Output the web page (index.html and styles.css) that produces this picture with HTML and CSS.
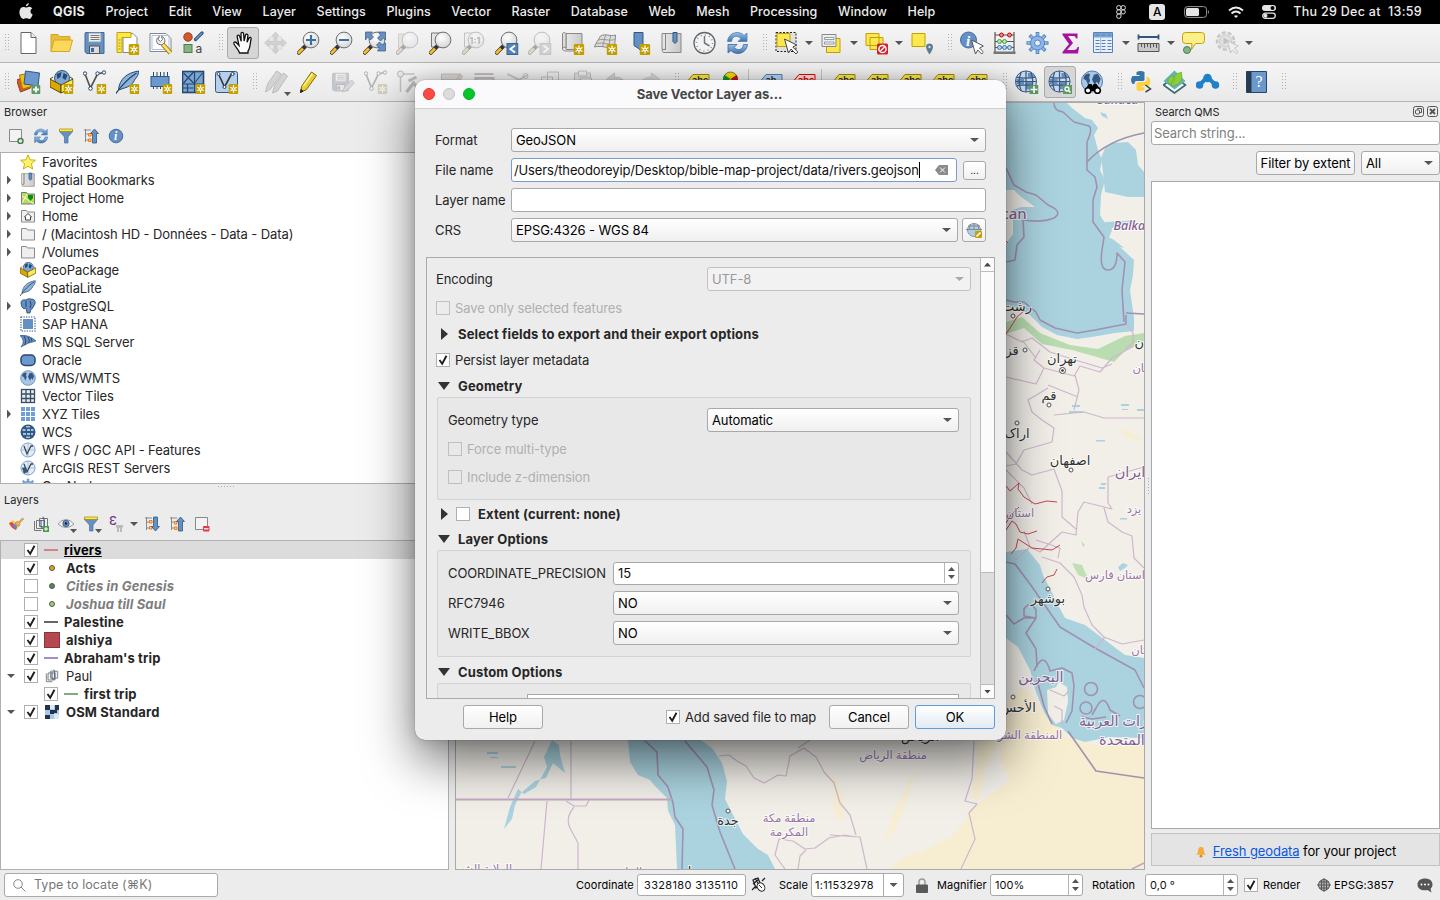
FILE: index.html
```html
<!DOCTYPE html>
<html lang="en">
<head>
<meta charset="utf-8">
<title>QGIS</title>
<link rel="stylesheet" href="styles.css">
</head>
<body>
<svg class="defs" aria-hidden="true">
<defs>
<linearGradient id="gl" x1="0" y1="0" x2="1" y2="0"><stop offset="0" stop-color="#e8e8e8"/><stop offset="1" stop-color="#c9c9c9"/></linearGradient>
<linearGradient id="gb" x1="0" y1="0" x2="0" y2="1"><stop offset="0" stop-color="#9cc0e6"/><stop offset="1" stop-color="#3d74b5"/></linearGradient>
<radialGradient id="glass" cx=".4" cy=".35" r=".7"><stop offset="0" stop-color="#fff"/><stop offset="1" stop-color="#d3d6d4"/></radialGradient>
</defs>
<symbol id="new" viewBox="0 0 11 11"><rect width="11" height="11" rx="1.500" fill="#c4a000"/><path d="M5.500 1.500v8M2 3.500l7 4M2 7.500l7-4" stroke="#fff" stroke-width="1.300"/><circle cx="5.500" cy="5.500" r="1.800" fill="#fff"/><circle cx="5.500" cy="5.500" r=".8" fill="#c4a000"/></symbol>
<symbol id="file" viewBox="0 0 24 24"><path d="M4.500 1.500h10l5 5v16h-15z" fill="#fff" stroke="#666"/><path d="M14.500 1.500v5h5" fill="#eee" stroke="#666"/></symbol>
<symbol id="open" viewBox="0 0 24 24"><path d="M1.500 20.500v-17h7l1.500 2h10.500v4" fill="#e8bd3b" stroke="#d5a629"/><path d="M1.500 20.500l3-11.500h18.500l-3 11.500z" fill="#fbd75b" stroke="#d5a629"/></symbol>
<symbol id="save" viewBox="0 0 24 24"><path d="M3 1.500h18.500v21H4l-1.500-2v-18z" fill="#6490c4" stroke="#3f6a9a"/><path d="M6 2h12.500v9H6z" fill="#eee" stroke="#8b9fb5"/><path d="M8 4.500h9M8 6.500h9M8 8.500h9" stroke="#777"/><path d="M7 15h10v7.500H7z" fill="#ddd" stroke="#555"/><path d="M8.500 17h3v4h-3z" fill="#3f6a9a"/></symbol>
<symbol id="layout" viewBox="0 0 24 24"><path d="M7.500 2.500h10l4 4v15h-14z" fill="#fff" stroke="#888"/><path d="M1.500 1.500h14v5h-9v15h-5z" fill="#fce94f" stroke="#c4a000"/><path d="M3 9h2M3 12h2M3 15h2M3 18h2" stroke="#a58a00"/><use href="#new" x="13" y="13" width="11" height="11"/></symbol>
<symbol id="manager" viewBox="0 0 24 24"><path d="M1.500 2.500h16l5 5v13h-21z" fill="#fff" stroke="#888"/><path d="M3.500 4.500h17v14h-17z" fill="none" stroke="#a9c1e4"/><path d="M14 13l8 9" stroke="#8a6d00" stroke-width="4.500"/><path d="M14 13l8 9" stroke="#fce36a" stroke-width="2.800"/><path d="M11 5.500c-3 1-4 5-1.500 7.500l4 1 3-3c0-3-1-5.500-3.500-5.500l1 3-2 2-2.500-2z" fill="#eee" stroke="#777"/></symbol>
<symbol id="styles" viewBox="0 0 24 24"><circle cx="6.500" cy="6" r="4.200" fill="#d6582a" stroke="#9c3b17"/><path d="M20.500 2l-6.500 6.500" stroke="#33567f" stroke-width="3.200" stroke-linecap="round"/><path d="M20.500 2l-6.500 6.500" stroke="#6b98cd" stroke-width="1.500"/><rect x="2.500" y="13.500" width="8" height="8" fill="#86b387" stroke="#4a7f4b"/><text x="14" y="22" font-size="12" fill="#444">a</text></symbol>
<symbol id="hand" viewBox="0 0 24 24"><path d="M8.500 22c-.5-3-4-6-5.500-9-.8-1.800 1.300-2.700 2.400-1.200L8 14.500 6.200 5.800c-.3-2 2-2.300 2.500-.6l1.500 5-.2-7.500c0-1.800 2.500-1.800 2.600 0l.5 7.300 1.400-6c.5-1.600 2.600-1 2.400.6l-.9 6.700 2-4.200c.8-1.400 2.500-.6 2.100.9C19 12 19.500 17 17 20v2z" fill="#fff" stroke="#111" stroke-width="1.300"/></symbol>
<symbol id="pansel" viewBox="0 0 24 24"><rect x="6" y="6" width="12" height="12" fill="#eadf9e" stroke="#bba"/><path d="M12 1l3.500 4h-2v5.500H19V8l4 4-4 4v-2.500h-5.500v5.500h2L12 23l-3.500-4h2v-5.500H5V16l-4-4 4-4v2.500h5.500V5h-2z" fill="#8fa6bf" stroke="#6c8097" stroke-width=".6"/></symbol>
<symbol id="lens" viewBox="0 0 24 24"><path d="M1 23l8-8" stroke="#333" stroke-width="4"/><path d="M1.500 22.500l5-5" stroke="#fbbc2b" stroke-width="2.600"/><circle cx="14.500" cy="9" r="7.900" fill="url(#glass)" stroke="#6c706d"/></symbol>
<symbol id="zin" viewBox="0 0 24 24"><use href="#lens"/><path d="M14.500 4v10M9.500 9h10" stroke="#3b6ea5" stroke-width="2.200"/></symbol>
<symbol id="zout" viewBox="0 0 24 24"><use href="#lens"/><path d="M9.500 9h10" stroke="#3b6ea5" stroke-width="2.200"/></symbol>
<symbol id="zfull" viewBox="0 0 24 24"><use href="#lens"/><path d="M3 1h7L8 3l3 3-3 3-3-3-2 3zM16 1h7v8l-2-2-3 3-3-3 3-3zM23 20h-8l2-3-3-3 3-3 3 3 3-2z" fill="#6490c4" stroke="#33567f" stroke-width=".7"/></symbol>
<symbol id="zsel" viewBox="0 0 24 24"><path d="M3 3h11v14H3z" fill="#ded48e" stroke="#999"/><use href="#lens"/></symbol>
<symbol id="zlay" viewBox="0 0 24 24"><path d="M3 2h12v14H3z" fill="#e4e4e4" stroke="#777"/><use href="#lens"/></symbol>
<symbol id="znat" viewBox="0 0 24 24"><path d="M3 2h12v14H3z" fill="#eee" stroke="#777"/><use href="#lens"/><text x="8" y="12.500" font-size="9" font-weight="700" fill="#555">1:1</text></symbol>
<symbol id="zlast" viewBox="0 0 24 24"><use href="#lens"/><rect x="12.500" y="12.500" width="11" height="11" fill="#5685b8" stroke="#3b648f"/><path d="M20.500 14.500l-4.500 3.500 4.500 3.500" fill="none" stroke="#fff" stroke-width="2"/></symbol>
<symbol id="znext" viewBox="0 0 24 24"><use href="#lens"/><rect x="12.500" y="12.500" width="11" height="11" fill="#aaa" stroke="#888"/><path d="M16 14.500l4.500 3.500-4.500 3.500" fill="none" stroke="#fff" stroke-width="2"/></symbol>
<symbol id="mapview" viewBox="0 0 24 24"><path d="M5.500 2.500h16v16h-16z" fill="url(#gl)" stroke="#888"/><path d="M2 3c0-2 3.500-2 3.500 0v14c-1-1.500-3.500-1-3.500 1z" fill="#ddd" stroke="#888"/><path d="M2 18c1 2 2 2 4 2h11" fill="none" stroke="#888"/><use href="#new" x="13" y="13" width="11" height="11"/></symbol>
<symbol id="view3d" viewBox="0 0 24 24"><path d="M7 5c5-3 10 1 15-1l-1 13c-6 1-12-3-20-1 1-4 4-7 6-11z" fill="#ddd" stroke="#888"/><path d="M5 9c6-2 11 2 17-1M3 13c7-3 12 2 18 0M12 4L9 16M17 5l-2 12" fill="none" stroke="#999"/><use href="#new" x="13" y="13" width="11" height="11"/></symbol>
<symbol id="bmnew" viewBox="0 0 24 24"><path d="M7.500 1.500h9v20l-4.500-4-4.500-3z" fill="#6490c4" stroke="#33567f"/><use href="#new" x="13" y="13" width="11" height="11"/></symbol>
<symbol id="bm" viewBox="0 0 24 24"><path d="M2.500 2.500h3.500v16h-3.500zM6 2.500h15.500v19H4.500c-3 0-2-4 1.500-3z" fill="url(#gl)" stroke="#888"/><path d="M13.500 1.500h4v9l-2 2-2-2z" fill="#6490c4" stroke="#33567f"/></symbol>
<symbol id="clock" viewBox="0 0 24 24"><circle cx="12" cy="12" r="10.500" fill="#f4f4f4" stroke="#666" stroke-width="1.300"/><circle cx="12" cy="12" r="8" fill="none" stroke="#6490c4" stroke-width="1.500" stroke-dasharray="1 3.190"/><path d="M12 5v7l5 3" fill="none" stroke="#777" stroke-width="1.500"/></symbol>
<symbol id="refresh" viewBox="0 0 24 24"><path d="M2 10.500C3 1 14-1 18.500 4.500L21.500 2v8.500h-9l3-3C11 3.500 7 5 6 10.500z" fill="url(#gb)" stroke="#4d80bd" stroke-width=".8"/><path d="M22 13.500C21 23 10 25 5.500 19.500L2.500 22v-8.500h9l-3 3c4.500 4 8.500 2.500 9.500-3z" fill="url(#gb)" stroke="#3768a3" stroke-width=".8"/></symbol>
<symbol id="select" viewBox="0 0 24 24"><rect x="1.500" y="1.500" width="20" height="19" fill="#e1e1e1" stroke="#222" stroke-dasharray="2 1.500"/><path d="M2.500 2.500h13v13h-13z" fill="#fce94f" stroke="#c4a000"/><path d="M10 8l4 14 2.500-4 5 5 1.800-2-5-5 4-2z" fill="#fff" stroke="#444"/></symbol>
<symbol id="selform" viewBox="0 0 24 24"><path d="M7 7.500h13.500v14H7z" fill="#fce94f" stroke="#c4a000"/><path d="M2.500 3.500h14v12h-14z" fill="#eceeec" stroke="#888"/><path d="M5 6.500h9.500v2H5zM5 11h9.500v2H5z" fill="#fff" stroke="#7b8793" stroke-width=".8"/></symbol>
<symbol id="desel" viewBox="0 0 24 24"><path d="M1.500 2.500h13v12h-13zM5.500 6.500h13v12h-13z" fill="#fce94f" stroke="#c4a000"/><rect x="12.500" y="12.500" width="11" height="11" rx="1.500" fill="#d91e25"/><circle cx="18" cy="18" r="3.600" fill="none" stroke="#fff" stroke-width="1.500"/><path d="M15.500 20.500l5-5" stroke="#fff" stroke-width="1.500"/></symbol>
<symbol id="selloc" viewBox="0 0 24 24"><path d="M2.500 2.500h13v13h-13z" fill="#fce94f" stroke="#c4a000"/><path d="M20 23.500c-6-8.500-3-11 0-11s6 2.500 0 11z" fill="#5d7d93"/><circle cx="20" cy="16" r="1.200" fill="#cde"/></symbol>
<symbol id="identify" viewBox="0 0 24 24"><circle cx="9" cy="9" r="8" fill="#6490c4" stroke="#4671a3"/><text x="6.500" y="14.500" font-family="Liberation Serif" font-style="italic" font-weight="700" font-size="15" fill="#fff">i</text><path d="M12 9l4 14 2.300-4 4 4 1.700-2-4-4 4-2z" fill="#fff" stroke="#555"/></symbol>
<symbol id="abacus" viewBox="0 0 24 24"><path d="M2.500 1v20M21.500 1v20M2 4h20M2 10.500h20M2 16.500h20" stroke="#555" stroke-width="1.200"/><path d="M1 20.500h22v2.500H1z" fill="#777"/><g fill="#e58b8b" stroke="#cc0000"><circle cx="9" cy="4" r="2"/><circle cx="17" cy="4" r="2"/></g><g fill="#bfe0b0" stroke="#4a9c4a"><circle cx="7" cy="10.500" r="2"/><circle cx="12" cy="10.500" r="2"/></g><g fill="#b7d4ee" stroke="#3f78b5"><circle cx="7" cy="16.500" r="2"/><circle cx="12" cy="16.500" r="2"/><circle cx="17" cy="16.500" r="2"/></g></symbol>
<symbol id="gear" viewBox="0 0 24 24"><g stroke="#4f83c4" stroke-width="3.600"><path d="M12 1v22M1 12h22M4.200 4.200l15.600 15.600M4.200 19.800L19.800 4.200"/></g><g stroke="#8fb5e6" stroke-width="2"><path d="M12 2v20M2 12h20M5 5l14 14M5 19L19 5"/></g><circle cx="12" cy="12" r="7" fill="#8fb5e6" stroke="#4f83c4"/><circle cx="12" cy="12" r="3" fill="#e6edf6" stroke="#4f83c4"/></symbol>
<symbol id="sigma" viewBox="0 0 24 24"><path d="M4 2.500h15v5h-1.500c-.5-2-1.500-2.500-3-2.500H9.500L14.500 12l-6 7h7c2 0 3-1 3.500-3h1.500l-1 6.500H4V21l6.500-8L4 4z" fill="#a3149f"/></symbol>
<symbol id="table" viewBox="0 0 24 24"><path d="M2 1.500h19v20H2z" fill="#e8f0fa" stroke="#5482b8"/><path d="M2.500 2h18v4.500h-18z" fill="#7aa4d8"/><path d="M4 9.500h4M10 9.500h4M16 9.500h4M4 12.500h4M10 12.500h4M16 12.500h4M4 15.500h4M10 15.500h4M16 15.500h4M4 18.500h4M10 18.500h4M16 18.500h4M4 4h4M10 4h4M16 4h3" stroke="#5482b8"/><path d="M9 6v15" stroke="#a9c4e4"/></symbol>
<symbol id="measure" viewBox="0 0 24 24"><path d="M2 6h20M2 3.500v5M22 3.500v5" stroke="#33567f" stroke-width="1.800"/><path d="M1.500 12.500h21v8h-21z" fill="#c9c9c9" stroke="#555"/><path d="M5 13v3M8 13v4M11 13v3M14 13v4M17 13v3M20 13v4" stroke="#555"/></symbol>
<symbol id="tip" viewBox="0 0 24 24"><path d="M4 1.500h16q3 0 3 3v5q0 3-3 3h-6l-4 6 .5-6H4q-3 0-3-3v-5q0-3 3-3z" fill="#fdf08a" stroke="#c4a000"/><circle cx="5.500" cy="19" r="3.500" fill="#86b387" stroke="#4a7f4b"/></symbol>
<symbol id="action" viewBox="0 0 24 24"><circle cx="11" cy="10" r="8.500" fill="#e4e4e4" stroke="#888" stroke-width="2.500" stroke-dasharray="4 2"/><circle cx="11" cy="10" r="6" fill="#ccc" stroke="#888"/><path d="M9 6.500l6 3.500-6 3.500z" fill="#777"/><path d="M13 10l3 12 2-3 4 4 1.500-2-3.500-4 4-2z" fill="#eee" stroke="#888"/></symbol>
<symbol id="dsm" viewBox="0 0 24 24"><path d="M0 10l11-4 3 12-10 4z" fill="#d6582a" stroke="#9c3b17"/><path d="M3 5l12-2 2 13-11 3z" fill="#f0be18" stroke="#a38000"/><path d="M9 1l14 2-1.500 13L7.500 14z" fill="#6b98cd" stroke="#33567f"/><rect x="15" y="15" width="9" height="9" rx="1" fill="#5b9a61"/><path d="M19.500 16.500v6M16.500 19.500h6" stroke="#fff" stroke-width="2"/></symbol>
<symbol id="globe" viewBox="0 0 24 24"><circle cx="12" cy="12" r="11" fill="#a7c6e8" stroke="#4b78ad"/><path d="M4 6q4-4 6-1l-1 3 1 3-2 5-2-5-3-2zM14 5l4-1 3 5-2 6-2-3-2 4-3-6z" fill="#34587f"/></symbol>
<symbol id="gpkg" viewBox="0 0 24 24"><circle cx="12.500" cy="8" r="7.500" fill="#7fa8d6" stroke="#34587f"/><path d="M7 4l5-2-1 5-3 2zM14 3l4 2-2 5-3-2z" fill="#27476b"/><path d="M.5 9l11 6v8L.5 17z" fill="#dba800" stroke="#594600"/><path d="M11.500 15l12-6v8l-12 6z" fill="#fce94f" stroke="#594600"/><path d="M.5 9l3-2M23.500 9l-3-2" stroke="#594600"/></symbol>
<symbol id="gpkgn" viewBox="0 0 24 24"><use href="#gpkg"/><use href="#new" x="14" y="14" width="10" height="10"/></symbol>
<symbol id="vec" viewBox="0 0 24 24"><path d="M2.500 4l5.500 14L15 4l6-1.500" fill="none" stroke="#555" stroke-width="1.700"/><g fill="#fff" stroke="#27476b"><circle cx="2.500" cy="3.500" r="1.700"/><circle cx="8" cy="18.500" r="1.800"/><circle cx="15" cy="3.500" r="1.700"/><circle cx="21.500" cy="2.500" r="1.700"/></g></symbol>
<symbol id="vecn" viewBox="0 0 24 24"><use href="#vec"/><use href="#new" x="14" y="14" width="10" height="10"/></symbol>
<symbol id="feather" viewBox="0 0 24 24"><path d="M3 20C4 9 11 3 23 1c0 5-2 6-4 9 0 0-2 6-10 8z" fill="#8db3dc" stroke="#27476b"/><path d="M0 24C7 14 12 9 21 3" fill="none" stroke="#27476b" stroke-width="1.300"/></symbol>
<symbol id="feathern" viewBox="0 0 24 24"><use href="#feather"/><use href="#new" x="14" y="14" width="10" height="10"/></symbol>
<symbol id="chip" viewBox="0 0 24 24"><path d="M5 2v17M8.500 2v17M12 2v17M15.500 2v17M19 2v17" stroke="#27476b"/><rect x="2.500" y="6.500" width="18" height="10" fill="#6b98cd" stroke="#33567f"/><use href="#new" x="14" y="14" width="10" height="10"/></symbol>
<symbol id="mesh" viewBox="0 0 24 24"><rect x="1" y="1.500" width="21" height="21" fill="#7aa6d6" stroke="#27476b" stroke-width="1.600"/><path d="M1 14h21M13 1v21M2 3l10 10M12 2L2 13M21 3L13 13M1 18h11M6 14v8" fill="none" stroke="#27476b" stroke-width="1.200"/><use href="#new" x="14" y="14" width="10" height="10"/></symbol>
<symbol id="virt" viewBox="0 0 24 24"><rect x="1" y="1.500" width="22" height="21" rx="2" fill="#b5cfec" stroke="#33567f"/><path d="M4 4l6 13L17 4l3-.5" fill="none" stroke="#333" stroke-width="1.600"/><g fill="#fff" stroke="#27476b"><circle cx="4" cy="4" r="1.500"/><circle cx="10" cy="17" r="1.500"/><circle cx="18" cy="4" r="1.500"/></g><use href="#new" x="14" y="14" width="10" height="10"/></symbol>
<symbol id="pencil" viewBox="0 0 24 24"><path d="M3 22.500l1-6L14 2l5 3.500-10 14z" fill="#e8cf2f" stroke="#7c6a00"/><path d="M3 22.500l.6-3 2 1.500z" fill="#222" stroke="#222"/><path d="M6 16L15 3.500" stroke="#fff5a0" stroke-width="1.500"/></symbol>
<symbol id="pencils" viewBox="0 0 24 24"><path d="M1 22l2-8L12 1l5 3L6 19zM8 23l2-7 9-13 4 3-10 15z" fill="#b7a49c" stroke="#776860"/></symbol>
<symbol id="saveed" viewBox="0 0 24 24"><use href="#save" width="20" height="20" y="2"/><path d="M12 22l2-5 7-7 3 3-7 7z" fill="#c3b0a3" stroke="#877"/></symbol>
<symbol id="node" viewBox="0 0 24 24"><path d="M4 22V4h14" fill="none" stroke="#777" stroke-width="1.500"/><circle cx="4" cy="4" r="3" fill="#ddd" stroke="#555"/><path d="M10 22l7-9 5 6M12 11l8-4" fill="none" stroke="#666" stroke-width="3"/></symbol>
<symbol id="form" viewBox="0 0 24 24"><path d="M2 4h19v6H2z" fill="#d1b48c" stroke="#777"/><path d="M12 20L20 4l3 2-8 15z" fill="#c99" stroke="#877"/></symbol>
<symbol id="trash" viewBox="0 0 24 24"><path d="M2 4h19M3 8h18v14H3z" fill="#caa" stroke="#966" stroke-width="2"/></symbol>
<symbol id="cut" viewBox="0 0 24 24"><path d="M2 4l16 8M22 5L6 14" stroke="#888" stroke-width="2"/><circle cx="20" cy="6" r="2.500" fill="none" stroke="#966"/></symbol>
<symbol id="copy" viewBox="0 0 24 24"><path d="M9 2h11v14H9zM3 7h11v14H3z" fill="#eee" stroke="#777"/></symbol>
<symbol id="paste" viewBox="0 0 24 24"><path d="M3 3h16v18H3z" fill="#ccc" stroke="#777"/><path d="M7 1h8v5H7zM9 8h11v13H9z" fill="#eee" stroke="#777"/></symbol>
<symbol id="undo" viewBox="0 0 24 24"><path d="M2 9l8-6v4q12 0 12 12-4-7-12-6v4z" fill="#b99" stroke="#977"/></symbol>
<symbol id="redo" viewBox="0 0 24 24"><path d="M22 9l-8-6v4Q2 7 2 19q4-7 12-6v4z" fill="#9b9" stroke="#798"/></symbol>
<symbol id="abc" viewBox="0 0 24 24"><path d="M6.500 4.500h16v12h-16l-5-6z" fill="#fce94f" stroke="#a38600"/><text x="5.500" y="13" font-size="9" font-weight="700" fill="#333">abc</text></symbol>
<symbol id="abcb" viewBox="0 0 24 24"><path d="M6.500 4.500h16v12h-16l-5-6z" fill="#b9d4f2" stroke="#4d80bd"/><text x="6" y="13" font-size="9" font-weight="700" fill="#333">ab</text></symbol>
<symbol id="abcr" viewBox="0 0 24 24"><path d="M6.500 4.500h16v12h-16l-5-6z" fill="#fdd" stroke="#e00"/><text x="5.500" y="13" font-size="9" font-weight="700" fill="#d00">abc</text></symbol>
<symbol id="pie" viewBox="0 0 24 24"><circle cx="11" cy="9" r="7" fill="#fcd900" stroke="#333" stroke-width=".6"/><path d="M11 9L5 5q-3 4 0 8z" fill="#0a9928"/><path d="M11 9l6-4q3 4 0 9z" fill="#c01818"/></symbol>
<symbol id="earth" viewBox="0 0 24 24"><circle cx="12" cy="12" r="11" fill="#c5dcf3" stroke="#34587f"/><path d="M2 9h8v6H2zM14 3h6v5h-6zM12 12h7v8h-7z" fill="#6490c4"/><path d="M2 7.500q10 2 20 0M2 16.500q10-2 20 0M1 12h22M12 1v22M7 2q-4 10 0 20M17 2q4 10 0 20" fill="none" stroke="#42597a" stroke-width="1.300"/></symbol>
<symbol id="earthp" viewBox="0 0 24 24"><use href="#earth" width="23" height="23"/><rect x="15" y="15" width="9" height="9" fill="#5b9a61"/><path d="M19.500 16v7M16 19.500h7" stroke="#fff" stroke-width="1.600"/></symbol>
<symbol id="earths" viewBox="0 0 24 24"><use href="#earth" width="23" height="23"/><rect x="15" y="15" width="9" height="9" fill="#5b9a61"/><circle cx="19" cy="19" r="2" fill="none" stroke="#fff" stroke-width="1.300"/><path d="M20.500 20.500l2 2" stroke="#fff" stroke-width="1.400"/></symbol>
<symbol id="bino" viewBox="0 0 24 24"><use href="#globe" width="23" height="23"/><path d="M4 21l4-7h3l1 2 1-2h3l5 7z" fill="#000"/><circle cx="7.500" cy="20.500" r="2.800" fill="#fff" stroke="#000" stroke-width="1.500"/><circle cx="17" cy="20.500" r="2.800" fill="#fff" stroke="#000" stroke-width="1.500"/></symbol>
<symbol id="python" viewBox="0 0 24 24"><path d="M7 2q4-2 8 0v8q0 1-2 1H7q-2 0-2 3H3q-3-4 0-8h7V5H7z" fill="#3775a9"/><path d="M17 7h2q4 4 0 9h-7v1h3v3q-4 2-8 0v-6q0-2 2-2h6q2 0 2-3z" fill="#fdd146"/><path d="M16 15l5 4-5 3" fill="none" stroke="#444" stroke-width="1.500"/></symbol>
<symbol id="leaf" viewBox="0 0 24 24"><path d="M1 15l11-8 11 8-11 8z" fill="#fff" stroke="#3b6a78" stroke-width="1.700"/><path d="M1 11L12 .5 23 11l-11 8.500z" fill="#64b3ac"/><path d="M6 14Q4 7 12 6q2 7-6 8zM9 16Q9 4 19 2q3 12-10 14z" fill="#8ece3c" stroke="#5fae26" stroke-width=".6"/></symbol>
<symbol id="nodes" viewBox="0 0 24 24"><path d="M4 15l8-8 8 8" fill="none" stroke="#1f82c8" stroke-width="4"/><g fill="#1f82c8"><circle cx="4" cy="15" r="3.800"/><circle cx="12" cy="8" r="4.300"/><circle cx="20" cy="15" r="3.800"/></g></symbol>
<symbol id="help" viewBox="0 0 24 24"><path d="M2 1.500h20v21H2z" fill="#6b98cd" stroke="#27476b"/><path d="M2 1.500h5v21H2z" fill="#263a50"/><text x="11" y="17" font-family="Liberation Serif" font-size="16" fill="#fff">?</text></symbol>
<symbol id="add16" viewBox="0 0 16 16"><path d="M1.500 1.500h12v12h-12z" fill="#f3f3f3" stroke="#888"/><circle cx="12.500" cy="13" r="2.500" fill="#dfeedd" stroke="#4a7f4b" stroke-width="1.500"/></symbol>
<symbol id="rem16" viewBox="0 0 16 16"><path d="M1.500 1.500h12v12h-12z" fill="#f3f3f3" stroke="#888"/><rect x="9" y="10" width="6.500" height="5.500" rx="1" fill="#e8373f"/><path d="M10 12.800h4.500" stroke="#fff" stroke-width="1.300"/></symbol>
<symbol id="filter" viewBox="0 0 16 16"><path d="M1 3h14l-5 6v6H6.500V9z" fill="#6490c4" stroke="#4671a3" stroke-width=".7"/><path d="M1.500 1h13v2.500h-13z" fill="#fce94f" stroke="#a38600" stroke-width=".7"/></symbol>
<symbol id="collapse" viewBox="0 0 16 16"><path d="M2.500 1v13M1 2h7M3 6h2M3 12h2" stroke="#888"/><path d="M5.500 5.500h2.500v2.500H5.500zM5.500 11h2.500v2.500H5.500z" fill="#ffd9a0" stroke="#f57900"/><path d="M11.500 1l4 4.500h-2V15h-4V5.500h-2z" fill="#6490c4" stroke="#33567f" stroke-width=".8"/></symbol>
<symbol id="expand" viewBox="0 0 16 16"><path d="M2.500 1v13M1 2h7M3 6h2M3 12h2" stroke="#888"/><path d="M5.500 4.500h2.500v2.500H5.500zM5.500 10.500h2.500v2.500H5.500z" fill="#ffd9a0" stroke="#f57900"/><path d="M11.500 15l4-4.500h-2V1h-4v9.500h-2z" fill="#6490c4" stroke="#33567f" stroke-width=".8"/></symbol>
<symbol id="info" viewBox="0 0 16 16"><circle cx="8" cy="8" r="6.800" fill="#6490c4" stroke="#4671a3"/><text x="6" y="12" font-family="Liberation Serif" font-style="italic" font-weight="700" font-size="12" fill="#fff">i</text></symbol>
<symbol id="star" viewBox="0 0 16 16"><path d="M8 .8l2.100 5 5.400.4-4.100 3.500 1.300 5.300L8 12.200 3.300 15l1.300-5.300L.5 6.200l5.400-.4z" fill="#fdf26b" stroke="#c9a400" stroke-width=".9"/></symbol>
<symbol id="folder" viewBox="0 0 16 16"><path d="M1.500 14V2.500h5l1 1.500h7v10z" fill="#efefef" stroke="#8a8a8a"/></symbol>
<symbol id="homef" viewBox="0 0 16 16"><use href="#folder"/><path d="M4.500 9L8 5.500 11.500 9H10.500v3h-5V9z" fill="#fff" stroke="#444"/></symbol>
<symbol id="proj" viewBox="0 0 16 16"><path d="M1.500 14V2.500h5l1 1.500h7v10z" fill="#b7dd5c" stroke="#777"/><path d="M2 6l12 8M2 13l5-9" stroke="#efffcf"/><path d="M8 5h5v3l-2.500 3L8 8z" fill="#0b8f12"/></symbol>
<symbol id="eleph" viewBox="0 0 16 16"><path d="M1 5q0-4 5-3 2-2 5-1 5 0 4 5l-3 5h-1l-1 4H7l-1-5-2 1q-3-2-3-6z" fill="#6490c4" stroke="#27476b" stroke-width=".8"/><path d="M6 3v6M10 3q2 3 0 7" fill="none" stroke="#27476b"/></symbol>
<symbol id="hana" viewBox="0 0 16 16"><rect x="3" y="3" width="10" height="10" fill="#6490c4"/><rect x="1" y="1" width="14" height="14" fill="none" stroke="#33567f" stroke-width="1.200" stroke-dasharray="1.300 1.200"/></symbol>
<symbol id="mssql" viewBox="0 0 16 16"><path d="M0 1.500q9-1 16 5.500-7 1-15 6 5-6-1-11.500z" fill="#6490c4" stroke="#33567f" stroke-width=".7"/><path d="M4 2q3 4 1 9M8 3q2 3 1 6M11 4q1 2 1 4" fill="none" stroke="#27476b"/></symbol>
<symbol id="oracle" viewBox="0 0 16 16"><rect x="1" y="3" width="14" height="10.500" rx="4" fill="#6b98cd" stroke="#27476b" stroke-width="1.500"/></symbol>
<symbol id="grid" viewBox="0 0 16 16"><rect x="1.500" y="1.500" width="13" height="13" fill="#e4ecf5" stroke="#3a4d63" stroke-width="1.300"/><path d="M6 1v14M10.500 1v14M1 6h14M1 10.500h14" stroke="#3a4d63" stroke-width="1.300"/></symbol>
<symbol id="xyz" viewBox="0 0 16 16"><path d="M1 1h4v4H1zM6 1h4v4H6zM11 1h4v4h-4zM1 6h4v4H1zM6 6h4v4H6zM11 6h4v4h-4zM1 11h4v4H1zM6 11h4v4H6zM11 11h4v4h-4z" fill="#6f9fd8"/></symbol>
<symbol id="wcs" viewBox="0 0 16 16"><circle cx="8" cy="8" r="7.500" fill="#34587f"/><path d="M2.500 5h3v2h-3zM7 5h3v2H7zM11 5h2.500v2H11zM3 9h3v2H3zM7 9h3v2H7zM11 9h2v2h-2zM6 2h4v1.500H6zM6 12.500h4V14H6z" fill="#9fc3e8"/></symbol>
<symbol id="wfs" viewBox="0 0 16 16"><circle cx="8" cy="8" r="7" fill="#e0ecf8" stroke="#7aa0cc"/><path d="M1 8h14M8 1v14" stroke="#a9c4e4"/><path d="M4 4l3 8 4-8h2" fill="none" stroke="#444" stroke-width="1.300"/></symbol>
<symbol id="arcgis" viewBox="0 0 16 16"><use href="#wfs"/><path d="M2 8l4-1 1 5-3 2z" fill="#34587f"/></symbol>
<symbol id="brush" viewBox="0 0 16 16"><path d="M1 7l4-3 6 6-3 4q-5-2-7-7z" fill="#f5d33b"/><path d="M1 7l3-1 5 5-1 3q-5-2-7-7z" fill="#e04646"/><path d="M4 9l3-1 2 2-1 3z" fill="#5d86d8"/><path d="M7 7l2-1.500 1.500.5 4-4 1.200 1-4 4 .3 2-2 1.500z" fill="#e9b25b" stroke="#a8772c" stroke-width=".6"/></symbol>
<symbol id="group" viewBox="0 0 16 16"><path d="M1.500 5v9.500h7M3.500 4.500h8v8h-8zM6.500 2.500h8v8h-8z" fill="#eee" stroke="#777"/><path d="M8 4v6q0 2 1.500 2T11 10V3q0-2-1.500-2" fill="none" stroke="#33567f"/></symbol>
<symbol id="groupn" viewBox="0 0 16 16"><use href="#group"/><rect x="10" y="10" width="6" height="6" fill="#4a9c4a"/><path d="M13 11v4M11 13h4" stroke="#fff"/></symbol>
<symbol id="eye" viewBox="0 0 16 16"><path d="M0 8q8-9 16 0-8 7-16 0z" fill="#f5f5f5" stroke="#999"/><circle cx="8" cy="7.500" r="3.200" fill="#6490c4" stroke="#33567f" stroke-width=".8"/><circle cx="8" cy="7.500" r="1.200" fill="#123"/></symbol>
<symbol id="eps" viewBox="0 0 16 16"><text x="1" y="9" font-size="15" fill="#713d82">ε</text><path d="M8 9h7v2l-1 1v4h-2v-4h-1v4H9v-4l-1-1z" fill="#bbb"/></symbol>
<symbol id="check" viewBox="0 0 14 14"><path d="M3.500 7l2.700 3.800L10.500 2.800" fill="none" stroke="#1d1d1d" stroke-width="1.900"/></symbol>
<symbol id="osm" viewBox="0 0 14 14"><path d="M0 0h14v14H0z" fill="#a9c7ea"/><path d="M0 0h5v5H0zM10 0h4v5h-4zM5 5h4v4H5zM0 10h5v4H0zM9 5h3v3H9z" fill="#22334a"/><path d="M9 9h5v5H9zM5 0h4v4H5z" fill="#dbe8f5"/></symbol>
</svg>

<header class="menubar">
  <svg class="apple" viewBox="0 0 14 17"><path d="M9.800 0c.1 1.500-1.200 3.300-2.900 3.300C6.700 1.800 8.200.2 9.800 0zM7.200 4.600c.8 0 1.500-.8 3-.8 1.300 0 2.400.7 3 1.600-2.500 1.400-2.100 4.900.5 6C13 13.500 11.700 16 10.200 16c-1.200 0-1.500-.7-2.900-.7s-1.800.7-2.900.7C2.500 16 .4 12.300.4 9c0-3.300 2-5.100 4-5.100 1.200 0 2.100.7 2.800.7z" fill="#e6e6e6"/></svg>
  <nav class="menus"><b>QGIS</b><span>Project</span><span>Edit</span><span>View</span><span>Layer</span><span>Settings</span><span>Plugins</span><span>Vector</span><span>Raster</span><span>Database</span><span>Web</span><span>Mesh</span><span>Processing</span><span>Window</span><span>Help</span></nav>
  <div class="tray">
    <svg width="10" height="14" viewBox="0 0 10 14" fill="none" stroke="#ddd"><rect x=".6" y=".6" width="4.400" height="4.200" rx="2"/><rect x="5" y=".6" width="4.400" height="4.200" rx="2"/><rect x=".6" y="4.800" width="4.400" height="4.200" rx="2"/><circle cx="7.200" cy="6.900" r="2.100"/><path d="M5 9v2.200a2.200 2.200 0 1 1-2.200-2.200z"/></svg>
    <span class="kbd">A</span>
    <svg width="26" height="12" viewBox="0 0 26 12"><rect x=".6" y=".6" width="22" height="10.800" rx="3" fill="none" stroke="#999"/><rect x="2" y="2" width="13" height="8" rx="1.500" fill="#e4e4e4"/><path d="M24 4v4q2-2 0-4z" fill="#999"/></svg>
    <svg width="16" height="13" viewBox="0 0 16 13" fill="none" stroke="#eee" stroke-width="2"><path d="M1 4.500q7-6 14 0M3.500 7.500q4.500-4 9 0"/><path d="M6 10q2-1.500 4 0l-2 2z" fill="#eee" stroke="none"/></svg>
    <svg width="14" height="14" viewBox="0 0 14 14"><rect width="14" height="6" rx="3" fill="#e4e4e4"/><circle cx="10.500" cy="3" r="2" fill="#000"/><rect x=".7" y="8.200" width="12.600" height="5.200" rx="2.600" fill="none" stroke="#e4e4e4" stroke-width="1.300"/><circle cx="3.500" cy="10.800" r="2" fill="#e4e4e4"/></svg>
    <span class="date">Thu 29 Dec at&nbsp; 13:59</span>
  </div>
</header>

<div class="toolbar">
  <i class="grip first"></i>
  <svg><use href="#file"/></svg><svg><use href="#open"/></svg><svg><use href="#save"/></svg><svg><use href="#layout"/></svg><svg><use href="#manager"/></svg><svg><use href="#styles"/></svg>
  <i class="grip short"></i>
  <svg class="on"><use href="#hand"/></svg><svg class="off"><use href="#pansel"/></svg><svg><use href="#zin"/></svg><svg><use href="#zout"/></svg><svg><use href="#zfull"/></svg><svg class="off"><use href="#zsel"/></svg><svg><use href="#zlay"/></svg><svg class="off"><use href="#znat"/></svg><svg><use href="#zlast"/></svg><svg class="off"><use href="#znext"/></svg><svg><use href="#mapview"/></svg><svg><use href="#view3d"/></svg><svg><use href="#bmnew"/></svg><svg><use href="#bm"/></svg><svg><use href="#clock"/></svg><svg><use href="#refresh"/></svg>
  <i class="grip short"></i>
  <svg><use href="#select"/></svg><i class="drop"></i><svg><use href="#selform"/></svg><i class="drop"></i><svg><use href="#desel"/></svg><i class="drop"></i><svg><use href="#selloc"/></svg>
  <i class="grip"></i>
  <svg><use href="#identify"/></svg><svg><use href="#abacus"/></svg><svg><use href="#gear"/></svg><svg><use href="#sigma"/></svg><svg><use href="#table"/></svg><i class="drop"></i><svg><use href="#measure"/></svg><i class="drop"></i><svg><use href="#tip"/></svg><svg class="off"><use href="#action"/></svg><i class="drop"></i>
</div>
<div class="toolbar">
  <i class="grip first"></i>
  <svg><use href="#dsm"/></svg><svg><use href="#gpkgn"/></svg><svg><use href="#vecn"/></svg><svg><use href="#feathern"/></svg><svg><use href="#chip"/></svg><svg><use href="#mesh"/></svg><svg><use href="#virt"/></svg>
  <i class="grip"></i>
  <span class="split"><svg class="off"><use href="#pencils"/></svg><i class="mini"></i></span><svg><use href="#pencil"/></svg><svg class="off"><use href="#saveed"/></svg><svg class="off"><use href="#vecn"/></svg><svg class="off"><use href="#node"/></svg>
  <i class="drop thin"></i>
  <svg class="off"><use href="#form"/></svg><svg class="off"><use href="#trash"/></svg><svg class="off"><use href="#cut"/></svg><svg class="off"><use href="#copy"/></svg><svg class="off"><use href="#paste"/></svg><svg class="off"><use href="#undo"/></svg><svg class="off"><use href="#redo"/></svg>
  <i class="grip short"></i>
  <svg><use href="#abc"/></svg><svg><use href="#pie"/></svg><i class="bar"></i><svg><use href="#abcb"/></svg><svg><use href="#abcr"/></svg><i class="bar"></i><svg><use href="#abc"/></svg><svg><use href="#abc"/></svg><svg><use href="#abc"/></svg><svg><use href="#abc"/></svg><svg><use href="#abc"/></svg>
  <i class="grip"></i>
  <svg><use href="#earthp"/></svg><svg class="on"><use href="#earths"/></svg><svg><use href="#bino"/></svg>
  <i class="grip short"></i>
  <svg><use href="#python"/></svg><svg><use href="#leaf"/></svg><svg><use href="#nodes"/></svg>
  <i class="grip short"></i>
  <svg><use href="#help"/></svg>
  <i class="grip short"></i>
</div>

<main class="work">
  <aside class="left">
    <h2>Browser</h2>
    <div class="minibar"><svg><use href="#add16"/></svg><svg><use href="#refresh"/></svg><svg><use href="#filter"/></svg><svg><use href="#collapse"/></svg><svg><use href="#info"/></svg></div>
    <ul class="tree browser">
      <li><i></i><svg><use href="#star"/></svg>Favorites</li>
      <li><i class="shut"></i><svg><use href="#bm"/></svg>Spatial Bookmarks</li>
      <li><i class="shut"></i><svg><use href="#proj"/></svg>Project Home</li>
      <li><i class="shut"></i><svg><use href="#homef"/></svg>Home</li>
      <li><i class="shut"></i><svg><use href="#folder"/></svg>/ (Macintosh HD - Données - Data - Data)</li>
      <li><i class="shut"></i><svg><use href="#folder"/></svg>/Volumes</li>
      <li><i></i><svg><use href="#gpkg"/></svg>GeoPackage</li>
      <li><i></i><svg><use href="#feather"/></svg>SpatiaLite</li>
      <li><i class="shut"></i><svg><use href="#eleph"/></svg>PostgreSQL</li>
      <li><i></i><svg><use href="#hana"/></svg>SAP HANA</li>
      <li><i></i><svg><use href="#mssql"/></svg>MS SQL Server</li>
      <li><i></i><svg><use href="#oracle"/></svg>Oracle</li>
      <li><i></i><svg><use href="#globe"/></svg>WMS/WMTS</li>
      <li><i></i><svg><use href="#grid"/></svg>Vector Tiles</li>
      <li><i class="shut"></i><svg><use href="#xyz"/></svg>XYZ Tiles</li>
      <li><i></i><svg><use href="#wcs"/></svg>WCS</li>
      <li><i></i><svg><use href="#wfs"/></svg>WFS / OGC API - Features</li>
      <li><i></i><svg><use href="#arcgis"/></svg>ArcGIS REST Servers</li>
      <li><i></i><svg><use href="#gear"/></svg>GeoNode</li>
    </ul>
    <div class="hsplit"><i></i></div>
    <h2 class="lay">Layers</h2>
    <div class="minibar layers-bar"><svg><use href="#brush"/></svg><svg><use href="#groupn"/></svg><span class="split"><svg><use href="#eye"/></svg><i class="mini"></i></span><span class="split"><svg><use href="#filter"/></svg><i class="mini"></i></span><svg><use href="#eps"/></svg><i class="drop"></i><svg><use href="#expand"/></svg><svg><use href="#collapse"/></svg><svg><use href="#rem16"/></svg></div>
    <ul class="tree layers">
      <li class="sel"><i></i><span class="cb"><svg><use href="#check"/></svg></span><em class="line red"></em><b><u>rivers</u></b></li>
      <li><i></i><span class="cb"><svg><use href="#check"/></svg></span><em class="dot gold"></em><b>Acts</b></li>
      <li class="dim"><i></i><span class="cb"></span><em class="dot green"></em><b>Cities in Genesis</b></li>
      <li class="dim"><i></i><span class="cb"></span><em class="dot lime"></em><b>Joshua till Saul</b></li>
      <li><i></i><span class="cb"><svg><use href="#check"/></svg></span><em class="line gray"></em><b>Palestine</b></li>
      <li><i></i><span class="cb"><svg><use href="#check"/></svg></span><em class="fill"></em><b>alshiya</b></li>
      <li><i></i><span class="cb"><svg><use href="#check"/></svg></span><em class="line violet"></em><b>Abraham's trip</b></li>
      <li><i class="opened"></i><span class="cb"><svg><use href="#check"/></svg></span><svg><use href="#group"/></svg>Paul</li>
      <li class="child"><i></i><span class="cb"><svg><use href="#check"/></svg></span><em class="line leafy"></em><b>first trip</b></li>
      <li><i class="opened"></i><span class="cb"><svg><use href="#check"/></svg></span><svg><use href="#osm"/></svg><b>OSM Standard</b></li>
    </ul>
  </aside>

  <section class="map">
  <svg viewBox="456 103 688 766" width="688" height="766">
    <rect x="456" y="103" width="688" height="766" fill="#f2efe9"/>
    <g fill="#f7edd0">
      <path d="M1000 712L1010 698 1020 687 1030 692 1045 715 1060 728 1068 738 1095 745H1144V869H889L905 857 922 852 936 844 950 838 964 823 968 812 990 795 1010 780 1000 760z"/>
      <path d="M977 741h22l-14 28-6 32-8-3 6-32zM829 774l7 5 8 20-2 24-8-8v-26zM741 839l14 9 8 5-15-5zM917 766l-10 33-12 32-12 12 14-38z" opacity=".9"/>
    </g>
    <g fill="#aad3df">
      <path d="M1006 103H1067L1072 108 1085 118 1092 120 1098 128 1094 135 1098 150 1102 160 1100 170 1105 180 1101 195 1100 215 1103 220 1112 230 1108 240 1120 247 1134 260 1133 275 1130 290 1134 318 1134 331 1115 333 1092 337 1077 339 1057 335 1042 327 1030 315 1015 307 1006 307z"/>
      <path d="M1101 158L1105 148 1113 143 1128 142 1136 150 1138 165 1144 172V197L1128 197 1105 192 1104 182 1103 172zM1106 222l20-1 6-1 2 3-22 5-4 12-8-2zM1100 112l6 2 2 5-6-3zM1099 232l15 8 10 8-20-5z"/>
      <path d="M1006 552L1027 549 1040 565 1043 575 1058 605 1065 618 1085 625 1105 640 1125 655 1144 658V738L1110 737 1085 742 1072 738 1062 728 1052 725 1044 712 1036 692 1030 670 1018 647 1006 638z"/>
      <path d="M628 740H701L713 749 722 763 727 781 725 799 732 813 743 834 758 849 768 855 775 869H677L675 825 668 811 667 798 655 786 650 780 638 775 630 762z"/>
      <path d="M552 740l7 5 1 10 5 18-12-10-7 15-11 3-14 12-6 12-3 14-8 10 6-22 8-18 6 5 12-7 11-20-3-10zM487 752h11v2h-11zM490 757h8v1h-8zM501 766h15v2h-15zM1072 405h8v2h-8zM1069 411h14v2h-14zM1121 404h8v2h-8zM1122 409h6v1h-6zM1137 409h7v2h-7zM1096 440h9v1.500h-9zM1101 483h5v2h-5zM1099 487h6v2h-6zM1118 567l5-4 5 2-3 3-5 3zM1120 518h7v1.500h-7z"/>
    </g>
    <g fill="#f2efe9"><path d="M1006 190l8 0 6 6 15 11-14 0-8 3 0 24-7 10zM1047 690l9-3 3-5 8 5 1 15-4 18-8 4-8-10z"/></g>
    <path d="M1006 322l16-5 18 16 30 12 28 4 27-13 19-3v8l-18 9-12 12-24-7-18-5-30-6-18-16-18 6z" fill="#b9dcb0"/>
    <path d="M1072 563l10 2 6 14-10-4zM1081 541l4 4-2 2z" fill="#bfe0b5"/>
    <path d="M1121 428l10 5 12 5-6 2-12-2z" fill="#f7edd0"/>
    <g fill="none" stroke="#a091b2" stroke-width="1.600" stroke-linejoin="round">
      <path d="M1054 103q0 8 9 9l11 10 15 4q4 3-2 16v28l8 7 2 10-4 13v22l11 15-2 13q-3 20 6 20t9-17l8 9-3 28 2 32M1126 313l18 1"/>
      <path d="M1087 162q20-22 57-29"/>
      <path d="M1006 168l8 17 12 7 10 3 12 10q16 7 6 13-12 5-31 2l1 17-7 8-2 15-9 2"/>
      <path d="M1006 300l8 2h10l12 10 4 8 15 8 22 5 18-3 31-6v-9"/>
      <path d="M1006 562l9 2 15 20 30 43 35 21 40 22 9 18"/>
      <path d="M1006 615l8 9 10-6h12v-8q-6-10-12-1v7l12 2-10 15 10 16 1 18"/>
      <path d="M1034 671q10-22 16 0l12-3 10 5 2 13-2 25-6 12M1106 717l-14 2-10-2M1092 715l4-7q8-16 14 2l10 6M1068 731l28 40 48 7M1037 680l7 26 8 18"/>
      <circle cx="1091" cy="689" r="6.500"/><circle cx="1086" cy="708" r="6"/><circle cx="1140" cy="702" r="6.500"/>
      <path d="M645 741l12 11 1 23 10 12 5 16 2 14 8 12-1 40M685 741l22 26 7 23-2 15 8 27 15 37"/>
      <path d="M1132 869l12-6" stroke="#c5a7c4"/>
      <path d="M456 799.500h216" stroke="#c5a7c4" stroke-width="2"/>
    </g>
    <g fill="none" stroke="#cdb7cd" stroke-width="1.200" stroke-linejoin="round">
      <path d="M535 741l-27 57M571 741v58M547 801l-6 68M566 801l8 5h12l3-6M574 807q-9 11-4 21l8 15 0 26"/>
      <path d="M719 756l10-1 8 6 9 5 8 12 10 5 14-8 8 1 4-20 14-8 12 9 8 15 10 11 6 20 10 12 6 20M798 748l12-8M830 835l30 2 7 32M855 837l-10-2-16 3-14 10-10 1-12-8-14-2-4 16 10 14M806 850l-6 6-2 13M974 741l-2 38-7 22 12 3-8 9 6 26-14 30"/>
      <path d="M1006 334l16 8 10-4 18 14 22 7 30 9 10-4M1040 350l-6 10 10 8-8 16-30-7M1044 368l30 8 6-10 20 6 12-14 22-12M1075 375l4 15-5 20M1048 385l30 12M1048 388l-20 12 4 12 10 8 12 8-2 14-28 8-8 14-10 2"/>
      <path d="M1054 415l30-3 20 6h40M1006 452l16 18 10 5 22-6 8 22 0 26 14 12M1006 470l18 18 8 16M1144 467l-36 10v26l4 6-28-7-6 10-2 23-14-3-22 20-10-5-6-16M1104 508l4 14 14 10 10 4 2 22 10 10M1042 557l18 6 14 14 8 18 2 12 8 18 12 12 18 7 22-4M1036 540l24 8-2 10M1105 637l-10 12M1015 560l14-12M1022 340l14 18M1127 325l6 8v10l-8 6"/>
      <path d="M1050 690l14 6 5-5M1054 706l8 4v14"/>
    </g>
    <g fill="none" stroke="#c8474f" stroke-width="1">
      <path d="M1006 334l6-9 5-8 8-7M1006 486l4 5 9-8-1 6 6 8 11 7 12-3 10 1M1006 530l6-9 4 3 4 8 8 2 9-3M1011 554l5-6 2-9 14 9 20 2 8-5M1042 583l5-6 7-2 3-6M1006 241l2 2M1019 507l-8 8-5 8"/>
    </g>
    <g fill="#fff" stroke="#555"><circle cx="1013" cy="316" r="2"/><circle cx="1025" cy="350" r="2"/><circle cx="1062.500" cy="370.500" r="3"/><circle cx="1049" cy="405" r="2"/><circle cx="1017" cy="423" r="2"/><circle cx="1071" cy="470" r="2"/><circle cx="1048" cy="589" r="2"/><circle cx="1013" cy="697" r="2"/><circle cx="728" cy="811" r="2"/></g>
    <circle cx="1062.500" cy="370.500" r="1.300" fill="#333"/>
    <g class="city">
      <text x="1017" y="311">رشت</text><text x="1009" y="355">قزو</text><text x="1062" y="363">تهران</text><text x="1049" y="400">قم</text><text x="1017" y="438">اراک</text><text x="1070" y="465">اصفهان</text><text x="1141" y="347">ان</text><text x="1048" y="603">بوشهر</text><text x="1018" y="712">الأحس</text><text x="728" y="825">جدة</text><text x="707" y="876">بورتسودان</text><text x="920" y="741">الرياض</text>
    </g>
    <g class="region">
      <text x="1140" y="372">نان</text><text x="1020" y="517">استان</text><text x="1134" y="513">یزد</text><text x="1115" y="579">استان فارس</text><text x="1140" y="654">گان</text><text x="1030" y="739">المنطقة الشر</text><text x="893" y="759">منطقة الرياض</text><text x="789" y="822">منطقة مكة</text><text x="789" y="836">المكرمة</text><text x="484" y="873">الولاية الشم</text><text x="640" y="876">نهر النيل</text>
    </g>
    <g class="country">
      <text x="1014" y="219" class="big">can</text><text x="1130" y="477">ایران</text><text x="1041" y="682">البحرين</text><text x="1113" y="726">رات العربية</text><text x="1122" y="745">المتحدة</text>
      <text x="1133" y="230" class="it">Balkan</text><text x="1118" y="104" class="it">Sanaca</text>
    </g>
  </svg>
  </section>

  <div class="vsplit"><i></i></div>
  <aside class="right">
    <h2>Search QMS<span class="wins"><svg viewBox="0 0 11 11"><rect x=".5" y=".5" width="10" height="10" rx="2"/><rect x="2.500" y="4" width="4" height="4" rx="1"/><path d="M4.500 3.500v-1h4v4h-1.500"/></svg><svg viewBox="0 0 11 11"><rect x=".5" y=".5" width="10" height="10" rx="2"/><path d="M3 3l5 5M8 3L3 8" stroke-width="2"/></svg></span></h2>
    <div class="field search">Search string...</div>
    <div class="filters"><span class="btn">Filter by extent</span><span class="combo">All</span></div>
    <div class="results"></div>
    <div class="promo"><svg viewBox="0 0 12 14"><path d="M1 10.500q2-2 2-5 0-3 3-3.500 3 .5 3 3.500 0 3 2 5z" fill="#f5ab3c"/><circle cx="6" cy="12" r="1.500" fill="#e0861d"/></svg><span><a>Fresh geodata</a> for your project</span></div>
  </aside>
</main>

<footer class="status">
  <div class="field locate"><svg viewBox="0 0 13 13" fill="none" stroke="#888"><circle cx="5" cy="5" r="4.300"/><path d="M8 8l4.500 4.500"/></svg>Type to locate (⌘K)</div>
  <label class="coord">Coordinate</label><div class="field cval">3328180 3135110</div>
  <svg class="mouse" viewBox="0 0 16 16" fill="none" stroke="#222"><path d="M2 3l5-2 2 5-4 5zM4 1l4 7M8 2l-6 5M11 4l3-3M1 13l3-3" stroke-width="1.300"/><ellipse cx="10" cy="10" rx="3.500" ry="4.500" transform="rotate(-35 10 10)" fill="#fff"/><path d="M8 8l3 3"/></svg>
  <label class="scale">Scale</label><div class="field sval">1:11532978<i class="step"></i></div>
  <svg class="lock" viewBox="0 0 12 15"><path d="M3 7V4q0-3 3-3t3 3v3" fill="none" stroke="#999" stroke-width="1.500"/><rect y="6.500" width="12" height="8.500" rx="1" fill="#595959"/></svg>
  <label class="mag">Magnifier</label><div class="field spin">100%<i class="ud"></i></div>
  <label class="rot">Rotation</label><div class="field spin">0,0 °<i class="ud"></i></div>
  <span class="cb rcb"><svg><use href="#check"/></svg></span><label class="ren">Render</label>
  <svg class="crs" viewBox="0 0 14 14" fill="none" stroke="#555"><circle cx="7" cy="7" r="5.500" fill="#bbb"/><path d="M0 7h14M7 0v14M2 4h10M2 10h10M4.500 2v10M9.500 2v10"/></svg><label class="epsg">EPSG:3857</label>
  <svg class="msg" viewBox="0 0 16 15"><path d="M8 .5c4 0 7.500 2 7.500 6 0 2-1 3.500-2 4.300l1 3.700-4-2.500C5 13 .5 11 .5 6.500c0-4 3.500-6 7.500-6z" fill="#555"/><g fill="#fff"><circle cx="4.500" cy="6.500" r="1"/><circle cx="8" cy="6.500" r="1"/><circle cx="11.500" cy="6.500" r="1"/></g></svg>
</footer>

<div class="dialog">
  <div class="title"><span class="lights"><i></i><i></i><i></i></span>Save Vector Layer as...</div>
  <div class="form">
    <label>Format</label><div class="combo">GeoJSON</div>
    <label>File name</label><div class="pair file"><div class="field focus">/Users/theodoreyip/Desktop/bible-map-project/data/rivers.geojson<i class="caret"></i><svg viewBox="0 0 13 10"><path d="M4 0h9v10H4L0 5z" fill="#8a8a8a"/><path d="M5 2.500l5 5M10 2.500l-5 5" stroke="#fff"/></svg></div><span class="btn dots">...</span></div>
    <label>Layer name</label><div class="field"></div>
    <label>CRS</label><div class="pair"><div class="combo">EPSG:4326 - WGS 84</div><span class="btn globe-btn"><svg viewBox="0 0 16 16"><circle cx="8" cy="8" r="6.500" fill="#a9cdea" stroke="#8a97a3"/><path d="M0 7.500h16M8 1v7M2 4h12M4.500 2q-2 3-1 5M11.500 2q2 3 1 5" fill="none" stroke="#888"/><rect x="9" y="9" width="7" height="7" rx="1" fill="#c4a000"/><path d="M10.500 14.500l4-4" stroke="#fff" stroke-width="1.700"/></svg></span></div>
  </div>
  <div class="scroll">
    <div class="pane">
      <div class="row enc"><label>Encoding</label><div class="combo disabled">UTF-8</div></div>
      <div class="row chk disabled"><span class="cb"></span>Save only selected features</div>
      <div class="row head"><i class="tri r"></i>Select fields to export and their export options</div>
      <div class="row chk"><span class="cb"><svg><use href="#check"/></svg></span>Persist layer metadata</div>
      <div class="row head"><i class="tri d"></i>Geometry</div>
      <div class="box geom">
        <div class="row gt"><label>Geometry type</label><div class="combo">Automatic</div></div>
        <div class="row chk disabled"><span class="cb"></span>Force multi-type</div>
        <div class="row chk disabled z"><span class="cb"></span>Include z-dimension</div>
      </div>
      <div class="row head extent"><i class="tri r"></i><span class="cb"></span>Extent (current: none)</div>
      <div class="row head lo"><i class="tri d"></i>Layer Options</div>
      <div class="box opts">
        <label>COORDINATE_PRECISION</label><div class="field spin">15<i class="ud"></i></div>
        <label>RFC7946</label><div class="combo">NO</div>
        <label>WRITE_BBOX</label><div class="combo">NO</div>
      </div>
      <div class="row head co"><i class="tri d"></i>Custom Options</div>
      <div class="box custom"><label>Data source</label><div class="field"></div></div>
    </div>
    <div class="sbar"><i class="up"></i><i class="thumb"></i><i class="down"></i></div>
  </div>
  <div class="actions"><span class="btn">Help</span><span class="add"><span class="cb"><svg><use href="#check"/></svg></span>Add saved file to map</span><span class="btn">Cancel</span><span class="btn ok">OK</span></div>
</div>
</body>
</html>
```
FILE: styles.css
```css
* { box-sizing: border-box; }
body { margin: 0; width: 1440px; height: 900px; overflow: hidden; display: flex; flex-direction: column; background: #ececec; color: #262626; font: 13px/18px Inter, "Liberation Sans", sans-serif; letter-spacing: -.1px; white-space: nowrap; }
svg { display: block; flex: none; }
i, em { display: block; flex: none; font-style: normal; }
.defs { position: absolute; width: 0; height: 0; }
ul { list-style: none; margin: 0; padding: 0; }
h2 { margin: 0; font-size: 11px; font-weight: 400; letter-spacing: .05px; }

/* menu bar */
.menubar { flex: none; height: 24px; background: #000; color: #ececec; display: flex; align-items: center; font-weight: 500; font-size: 12.5px; letter-spacing: .08px; }
.apple { width: 14px; height: 17px; margin: -2px 20px 0 19px; }
.menus { display: flex; gap: 20.500px; }
.menus b { font-weight: 700; letter-spacing: .3px; }
.tray { margin-left: auto; padding-right: 18px; display: flex; align-items: center; }
.kbd { width: 16px; height: 16px; margin: 0 19px 0 23px; border-radius: 3px; background: #e6e6e6; color: #000; text-align: center; line-height: 16px; font-size: 12px; }
.tray svg + svg { margin-left: 18px; }
.date { margin-left: 17px; letter-spacing: .3px; }

/* toolbars */
.toolbar { flex: none; height: 39px; border-bottom: 1px solid #b4b4b4; background: linear-gradient(#f5f5f5, #e9e9e9); display: flex; align-items: center; letter-spacing: 0; }
.toolbar svg { width: 33px; height: 32px; padding: 4px 4.500px; }
.toolbar .on { width: 32px; margin: 0 .5px; padding: 3px; background: #d6d6d6; border: 1px solid #aaa; border-radius: 3px; }
.off { opacity: .38; filter: grayscale(.7); }
.grip { width: 17px; height: 18px; background: repeating-linear-gradient(#b0b0b0 0 1px, transparent 1px 3px) 10px 0 / 1px 100% no-repeat, repeating-linear-gradient(#b0b0b0 0 1px, transparent 1px 3px) 13px 0 / 1px 100% no-repeat; }
.grip.first { width: 12px; background-position: 5px 0, 8px 0; }
.grip.short { width: 16px; background-position: 9px 0, 12px 0; }
.drop { width: 12px; height: 4px; background: #555; clip-path: polygon(2px 0, 10px 0, 6px 4px); }
.thin { width: 10px; }
.bar { width: 7px; height: 26px; border-left: 1px solid #c4c4c4; }
.split { position: relative; }
.mini { position: absolute; right: 2px; bottom: 2px; width: 7px; height: 4px; background: #555; clip-path: polygon(0 0, 100% 0, 50% 100%); }

/* workspace */
.work { flex: none; height: 768px; display: flex; }
.left { width: 449px; display: flex; flex-direction: column; margin-right: 6px; }
.left h2 { height: 20px; line-height: 20px; padding-left: 4px; }
.minibar { height: 30px; display: flex; align-items: center; gap: 9px; padding: 0 0 3px 8px; }
.minibar svg { width: 16px; height: 16px; }
.minibar .mini { right: -3px; bottom: -1px; }
.minibar .drop { margin: 0 -5px; }
.tree { border: 1px solid #b0b0b0; background: #fff; overflow: hidden; }
.browser { height: 332px; }
.tree li { height: 18px; display: flex; align-items: center; }
.browser li svg { width: 16px; height: 16px; margin-right: 6px; }
.browser li i { width: 19px; height: 9px; }
.browser .shut { background: #555; clip-path: polygon(6px 0, 10px 4.500px, 6px 9px); }
.hsplit { height: 7px; padding: 2px 0 0 218px; }
.hsplit i { width: 17px; height: 1px; background: repeating-linear-gradient(90deg, #aaa 0 1px, transparent 1px 3px); }
.left .lay { height: 19px; line-height: 19px; }
.layers-bar { height: 30px; padding-bottom: 2px; }
.layers { flex: 1; }
.layers b { letter-spacing: .16px; }
.layers li > i { width: 23px; height: 4px; }
.layers .opened { background: #555; clip-path: polygon(6px 0, 14px 0, 10px 4px); }
.layers li > svg { width: 16px; height: 14px; margin-right: 6px; }
.layers .cb { margin-right: 6px; }
.layers .sel { background: #dcdcdc; color: #000; }
.layers .dim b { color: #7d7d7d; font-style: italic; }
.layers .child { padding-left: 20px; }
.cb { flex: none; width: 14px; height: 14px; border: 1px solid #b0b0b0; background: #fff; display: block; }
.cb svg { width: 14px; height: 14px; margin: -1px; }
.line { width: 14px; height: 2px; margin-right: 6px; }
.red { background: #d18488; } .gray { background: #666; } .violet { background: #a58dc2; } .leafy { background: #82a982; }
.dot { width: 6px; height: 6px; margin: 0 11px 0 5px; border-radius: 50%; border: 1px solid #555; }
.gold { background: #dfa51f; } .green { background: #4f8a52; } .lime { background: #9bd06c; }
.fill { width: 16px; height: 16px; margin-right: 6px; background: #b5494f; border: 1px solid #87353a; }

.map { width: 690px; border: 1px solid #aaa; overflow: hidden; letter-spacing: 0; }
.map text { font-family: "Noto Sans", "DejaVu Sans", sans-serif; text-anchor: middle; paint-order: stroke; stroke: #fff; stroke-opacity: .75; stroke-width: 2px; }
.city { font-size: 13px; fill: #333; }
.region { font-size: 11.500px; fill: #9a74a4; }
.country { font-size: 14.500px; font-weight: 500; fill: #845f93; }
.country .it { font-size: 12.500px; font-style: italic; }
.country .big { font-size: 15px; }

.vsplit { width: 6px; padding: 376px 0 0 3px; }
.vsplit i { width: 1px; height: 17px; background: repeating-linear-gradient(#aaa 0 1px, transparent 1px 3px); }
.right { width: 289px; display: flex; flex-direction: column; }
.right h2 { height: 19px; line-height: 20px; padding: 0 2px 0 4px; display: flex; justify-content: space-between; align-items: center; letter-spacing: -.05px; }
.wins { display: flex; gap: 3px; }
.wins svg { width: 11px; height: 11px; fill: none; stroke: #555; }
.field, .combo, .btn { display: flex; align-items: center; height: 24px; border: 1px solid #a9a9a9; border-radius: 3px; background: #fff; color: #111; padding-left: 4px; }
.combo, .btn { background: linear-gradient(#fff, #f0f0f0); color: #000; }
.btn { justify-content: center; padding: 0; }
.combo { justify-content: space-between; padding-right: 6px; }
.combo::after { content: ""; width: 9px; height: 4px; background: #555; clip-path: polygon(0 0, 100% 0, 50% 100%); }
.search { color: #808080; padding-left: 2px; }
.filters { display: flex; gap: 6px; margin: 6px 0; justify-content: flex-end; }
.filters .btn { width: 99px; } .filters .combo { width: 79px; }
.results { height: 648px; border: 1px solid #a9a9a9; background: #fff; }
.promo { height: 33px; margin-top: 4px; border: 1px solid #c3c3c3; background: #e4e4e4; display: flex; align-items: center; justify-content: center; gap: 6px; padding-top: 3px; color: #000; }
.promo svg { width: 12px; height: 13px; }
.promo a { color: #0b57e0; text-decoration: underline; }

/* status bar */
.status { flex: none; height: 30px; display: flex; align-items: center; font-size: 11px; letter-spacing: .05px; color: #000; }
.status .field { height: 22px; font-size: 11px; }
.status .locate { width: 214px; height: 24px; margin: 0 358px 0 4px; padding-left: 8px; gap: 8px; font-size: 12.5px; color: #777; }
.locate svg { width: 13px; height: 13px; }
.coord { width: 61px; } .status .cval { width: 109px; padding-left: 6px; letter-spacing: .35px; }
.mouse { width: 16px; height: 16px; margin: 0 12px 0 5px; }
.scale { width: 32px; } .status .sval { width: 93px; height: 24px; padding-left: 3px; letter-spacing: .25px; }
.step { margin-left: auto; width: 20px; height: 22px; border-left: 1px solid #a9a9a9; display: flex; align-items: center; justify-content: center; }
.step::after { content: ""; width: 8px; height: 4px; background: #555; clip-path: polygon(0 0, 100% 0, 50% 100%); }
.lock { width: 12px; height: 15px; margin: 0 9px 0 12px; }
.mag { width: 53px; } .status .spin { width: 93px; }
.ud { margin-left: auto; width: 14px; height: 20px; border-left: 1px solid #b5b5b5; display: flex; flex-direction: column; justify-content: center; align-items: center; gap: 4px; }
.ud::before, .ud::after { content: ""; width: 7px; height: 4px; background: #555; clip-path: polygon(0 100%, 100% 100%, 50% 0); }
.ud::after { clip-path: polygon(0 0, 100% 0, 50% 100%); }
.rot { width: 53px; margin-left: 9px; }
.rcb { margin: 0 5px 0 6px; }
.ren { width: 54px; } .crs { width: 14px; height: 14px; margin-right: 3px; }
.epsg { width: 83px; letter-spacing: .15px; } .msg { width: 16px; height: 15px; }

/* dialog window */
.dialog { position: absolute; left: 415px; top: 80px; width: 591px; height: 660px; border-radius: 10px; background: #ececec; box-shadow: 0 0 1px rgba(0,0,0,.6), 0 0 14px rgba(0,0,0,.14), 0 20px 50px rgba(0,0,0,.55); }
.title { position: relative; height: 29px; padding-right: 2px; border-bottom: 1px solid #cfcfcf; border-radius: 10px 10px 0 0; background: #fafafc; text-align: center; line-height: 28px; font-weight: 700; letter-spacing: 0; color: #464646; }
.lights { position: absolute; left: 8px; top: 8px; display: flex; gap: 8px; }
.lights i { width: 12px; height: 12px; border-radius: 50%; background: #fe4a43; border: 1px solid #e0352e; }
.lights i:nth-child(2) { background: #dcdcdd; border-color: #c2c2c3; }
.lights i:nth-child(3) { background: #05c62b; border-color: #04b022; }
.form { display: grid; grid-template-columns: 76px 1fr; grid-auto-rows: 24px; row-gap: 6px; align-items: center; padding: 19px 20px 0; }
.pair { display: flex; align-items: center; gap: 4px; }
.pair > :first-child { flex: 1; }
.file { gap: 6px; }
.focus { border-color: #7a9cc6; padding-left: 2px; letter-spacing: -.14px; }
.focus svg { width: 13px; height: 10px; margin: 0 8px 0 auto; }
.caret { width: 1px; height: 16px; background: #000; }
.dots { width: 23px; height: 19px; font-size: 10px; }
.globe-btn { width: 24px; }
.globe-btn svg { width: 16px; height: 16px; }
.scroll { margin: 15px 11px 0; height: 442px; border: 1px solid #aaa; display: flex; overflow: hidden; }
.pane { flex: 1; padding: 9px 9px 0; height: 440px; overflow: hidden; }
.row { display: flex; align-items: center; }
.enc label { width: 271px; } .enc .combo { flex: 1; }
.chk { height: 34px; gap: 5px; }
.disabled { color: #b0b0b0; }
.combo.disabled { color: #999; border-color: #c2c2c2; background: #f2f2f2; }
.combo.disabled::after { background: #aaa; }
.disabled .cb { background: transparent; border-color: #c0c0c0; }
.head { height: 18px; font-weight: 700; letter-spacing: .15px; }
.tri { width: 12px; height: 12px; margin: 0 8px 0 2px; background: #333; }
.tri.r { clip-path: polygon(3px 0, 10px 6px, 3px 12px); }
.tri.d { clip-path: polygon(0 2px, 12px 2px, 6px 10px); }
.box { margin-left: 1px; border: 1px solid #d2d2d2; border-radius: 2px; background: #e8e8e8; }
.geom { margin-top: 2px; height: 103px; padding: 10px 11px 0 10px; }
.gt label { width: 259px; } .gt .combo { flex: 1; }
.geom .z { height: 22px; }
.extent { height: 28px; } .extent .tri { margin-right: 6px; } .extent .cb { margin-right: 8px; }
.lo { height: 22px; }
.opts { height: 107px; padding: 10px 11px 0 10px; display: grid; grid-template-columns: 165px 1fr; grid-auto-rows: 24px; row-gap: 6px; align-items: center; }
.co { height: 26px; padding-top: 4px; }
.custom { height: 60px; padding: 10px 11px 0 10px; display: flex; }
.custom label { width: 79px; } .custom .field { flex: 1; border-radius: 0; }
.opts .spin { height: 23px; }
.sbar { width: 14px; border-left: 1px solid #bbb; display: flex; flex-direction: column; background: #dedede; }
.sbar i { background: #fbfbfb; display: flex; align-items: center; justify-content: center; }
.sbar .up, .sbar .down { height: 14px; }
.up { border-bottom: 1px solid #bbb; } .down { border-top: 1px solid #bbb; margin-top: auto; }
.thumb { height: 301px; border-bottom: 1px solid #bbb; }
.up::after, .down::after { content: ""; width: 7px; height: 4px; background: #444; clip-path: polygon(0 100%, 100% 100%, 50% 0); }
.down::after { clip-path: polygon(0 0, 100% 0, 50% 100%); }
.actions { display: flex; align-items: center; padding: 6px 11px 0 48px; }
.actions .btn { width: 80px; margin-left: 6px; }
.actions .btn:first-child { margin: 0 123px 0 0; }
.add { display: flex; align-items: center; gap: 5px; width: 157px; }
.actions .ok { border-color: #5a9de0; background: linear-gradient(#fff, #e3eaf3); }
```
